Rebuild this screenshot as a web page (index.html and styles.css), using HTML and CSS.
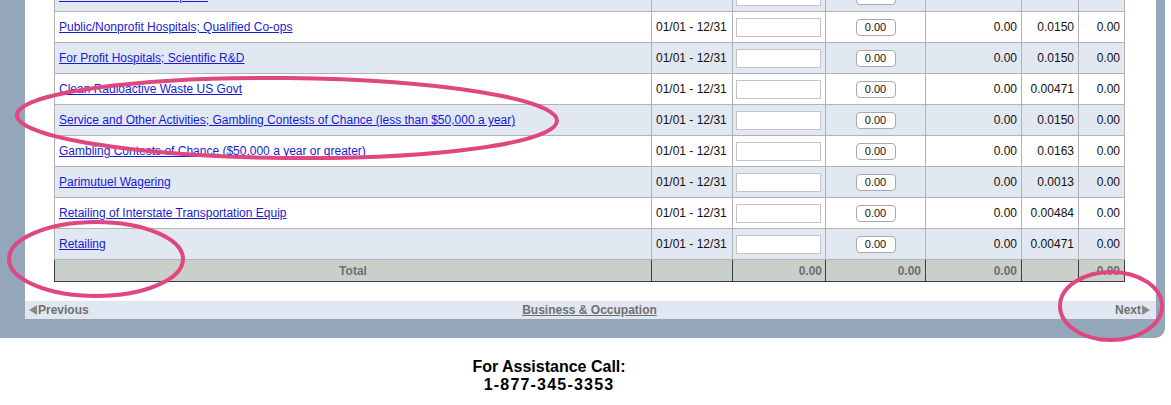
FILE: index.html
```html
<!DOCTYPE html>
<html lang="en">

<head>
  <meta charset="UTF-8" />
  <title>Business &amp; Occupation – Deductions</title>
  <link rel="stylesheet" href="styles.css">
</head>

<body>
  <div class="frame">
    <div class="panel">
      <div class="table-wrap">
        <table class="rates">
          <colgroup>
            <col class="c-name">
            <col class="c-period">
            <col class="c-input">
            <col class="c-btn">
            <col class="c-num">
            <col class="c-rate">
            <col class="c-tax">
          </colgroup>
          <tbody>
            <tr class="alt">
              <td><a href="#">Radioactive Waste Disposal</a></td>
              <td>01/01 - 12/31</td>
              <td><input type="text"></td>
              <td class="mid"><button>0.00</button></td>
              <td class="num">0.00</td>
              <td class="num">0.0150</td>
              <td class="num">0.00</td>
            </tr>
            <tr>
              <td><a href="#">Public/Nonprofit Hospitals; Qualified Co-ops</a></td>
              <td>01/01 - 12/31</td>
              <td><input type="text"></td>
              <td class="mid"><button>0.00</button></td>
              <td class="num">0.00</td>
              <td class="num">0.0150</td>
              <td class="num">0.00</td>
            </tr>
            <tr class="alt">
              <td><a href="#">For Profit Hospitals; Scientific R&amp;D</a></td>
              <td>01/01 - 12/31</td>
              <td><input type="text"></td>
              <td class="mid"><button>0.00</button></td>
              <td class="num">0.00</td>
              <td class="num">0.0150</td>
              <td class="num">0.00</td>
            </tr>
            <tr>
              <td><a href="#">Clean Radioactive Waste US Govt</a></td>
              <td>01/01 - 12/31</td>
              <td><input type="text"></td>
              <td class="mid"><button>0.00</button></td>
              <td class="num">0.00</td>
              <td class="num">0.00471</td>
              <td class="num">0.00</td>
            </tr>
            <tr class="alt">
              <td><a href="#">Service and Other Activities; Gambling Contests of Chance (less than $50,000 a year)</a></td>
              <td>01/01 - 12/31</td>
              <td><input type="text"></td>
              <td class="mid"><button>0.00</button></td>
              <td class="num">0.00</td>
              <td class="num">0.0150</td>
              <td class="num">0.00</td>
            </tr>
            <tr>
              <td><a href="#">Gambling Contests of Chance ($50,000 a year or greater)</a></td>
              <td>01/01 - 12/31</td>
              <td><input type="text"></td>
              <td class="mid"><button>0.00</button></td>
              <td class="num">0.00</td>
              <td class="num">0.0163</td>
              <td class="num">0.00</td>
            </tr>
            <tr class="alt">
              <td><a href="#">Parimutuel Wagering</a></td>
              <td>01/01 - 12/31</td>
              <td><input type="text"></td>
              <td class="mid"><button>0.00</button></td>
              <td class="num">0.00</td>
              <td class="num">0.0013</td>
              <td class="num">0.00</td>
            </tr>
            <tr>
              <td><a href="#">Retailing of Interstate Transportation Equip</a></td>
              <td>01/01 - 12/31</td>
              <td><input type="text"></td>
              <td class="mid"><button>0.00</button></td>
              <td class="num">0.00</td>
              <td class="num">0.00484</td>
              <td class="num">0.00</td>
            </tr>
            <tr class="alt">
              <td><a href="#">Retailing</a></td>
              <td>01/01 - 12/31</td>
              <td><input type="text"></td>
              <td class="mid"><button>0.00</button></td>
              <td class="num">0.00</td>
              <td class="num">0.00471</td>
              <td class="num">0.00</td>
            </tr>
            <tr class="total">
              <td class="mid">Total</td>
              <td></td>
              <td class="num">0.00</td>
              <td class="num">0.00</td>
              <td class="num">0.00</td>
              <td></td>
              <td class="num">0.00</td>
            </tr>
          </tbody>
        </table>
      </div>

      <div class="pager">
        <a href="#" class="pager-link prev">
          <svg width="8" height="10" viewBox="0 0 8 10"><path d="M8 0 L0 5 L8 10 Z" fill="#8a8a8a"/></svg>Previous
        </a>
        <a href="#" class="pager-title">Business &amp; Occupation</a>
        <a href="#" class="pager-link next">
          Next<svg width="8" height="10" viewBox="0 0 8 10"><path d="M0 0 L8 5 L0 10 Z" fill="#8a8a8a"/></svg>
        </a>
      </div>
    </div>
  </div>

  <div class="assist">
    <div>For Assistance Call:</div>
    <div class="phone">1-877-345-3353</div>
  </div>

  <!-- reviewer's marker circles drawn over the page -->
  <svg class="marks" width="1171" height="405" viewBox="0 0 1171 405">
    <ellipse cx="287" cy="118" rx="270" ry="40" transform="rotate(0.6 287 118)" />
    <ellipse cx="96" cy="259" rx="87" ry="37" />
    <ellipse cx="1111" cy="306" rx="51" ry="34" />
  </svg>
</body>

</html>
```

FILE: styles.css
```css
:root {
  --frame: #93a6ba;
  --row-alt: #e1e8f2;
  --grid: #b3b3b3;
  --total-bg: #c9d0c9;
  --muted: #6f6f6f;
  --link: #1a1ad2;
}

* {
  box-sizing: border-box;
}

body {
  margin: 0;
  background: #fff;
  font-family: "Liberation Sans", Arial, sans-serif;
  font-size: 12px;
  color: #111;
  position: relative;
  overflow: hidden;
}

.frame {
  width: 1165px;
  background: var(--frame);
  padding: 0 9px 19px 25px;
  border-bottom-right-radius: 10px;
  margin-top: -20px;
}

.panel {
  background: #fff;
}

.table-wrap {
  padding: 0 32px 19px 29px;
}

.rates {
  width: 1070px;
  table-layout: fixed;
  border-collapse: collapse;
}

.c-name { width: 597px; }
.c-period { width: 81px; }
.c-input { width: 93px; }
.c-btn { width: 100px; }
.c-num { width: 96px; }
.c-rate { width: 57px; }
.c-tax { width: 46px; }

.rates td {
  height: 31px;
  padding: 0 4px;
  border: 1px solid var(--grid);
  white-space: nowrap;
  vertical-align: middle;
}

.rates tr.alt td {
  background: var(--row-alt);
}

.rates td.num {
  text-align: right;
}

.rates td.mid {
  text-align: center;
}

.rates a {
  color: var(--link);
  text-decoration: underline;
}

.rates input {
  display: block;
  width: 85px;
  height: 19px;
  border: 1px solid #c4c4c4;
  background: #fff;
  padding: 0;
}

.rates td:nth-child(3) {
  padding: 0 3px;
}

.rates button {
  width: 40px;
  height: 17px;
  padding: 0;
  font-family: "Liberation Sans", Arial, sans-serif;
  font-size: 11px;
  color: #111;
  background: #fff;
  border: 1px solid #a9a9a9;
  border-radius: 4px;
}

.rates tr.total td {
  height: 22px;
  background: var(--total-bg);
  border: 1px solid #3c3c3c;
  color: var(--muted);
  font-weight: bold;
}

.pager {
  height: 18px;
  background: #e1e7f1;
  display: grid;
  grid-template-columns: 1fr auto 1fr;
  align-items: center;
  padding: 0 6px 0 4px;
  font-weight: bold;
  font-size: 12px;
}

.pager a {
  color: var(--muted);
}

.pager-link {
  display: flex;
  align-items: center;
  gap: 1px;
  text-decoration: none;
}

.pager-link.next {
  justify-content: flex-end;
}

.pager-title {
  text-decoration: underline;
}

.assist {
  padding: 20px 73px 0 0;
  text-align: center;
  font-weight: bold;
  font-size: 16px;
  line-height: 18px;
  color: #000;
}

.phone {
  letter-spacing: 1.2px;
}

.marks {
  position: absolute;
  top: 0;
  left: 0;
  pointer-events: none;
}

.marks ellipse {
  fill: none;
  stroke: #e0467f;
  stroke-width: 4;
}
```
